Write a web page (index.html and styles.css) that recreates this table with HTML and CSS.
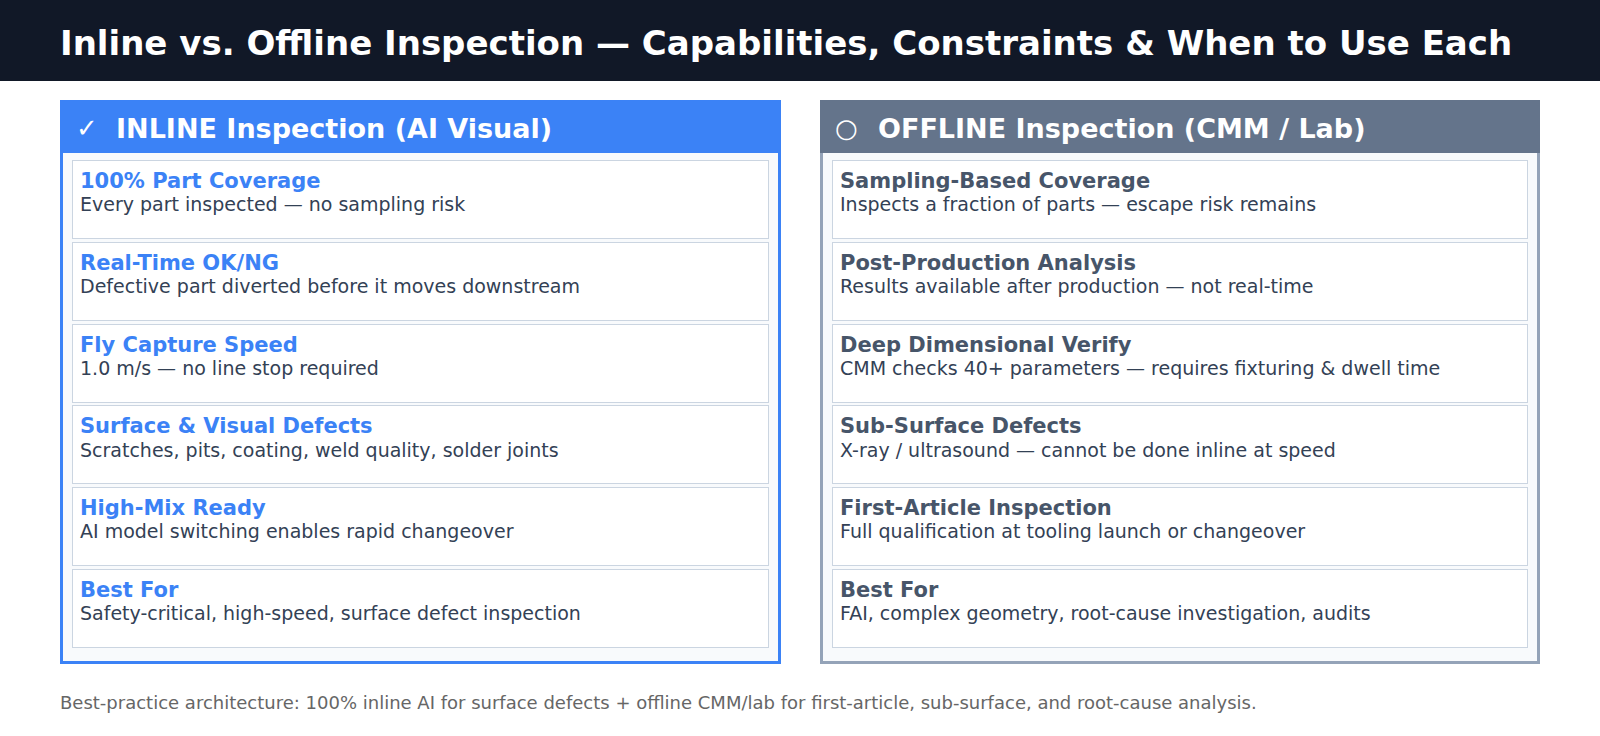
FILE: index.html
```html
<!DOCTYPE html>
<html lang="en">
<head>
<meta charset="utf-8">
<title>Inline vs. Offline Inspection</title>
<link rel="stylesheet" href="styles.css">
</head>
<body>
<header class="topbar">
  <h1 class="topbar-title">Inline vs. Offline Inspection — Capabilities, Constraints &amp; When to Use Each</h1>
</header>
<main class="compare">
  <section class="panel panel-inline">
    <div class="panel-head"><span class="panel-icon">✓</span><span class="panel-name">INLINE Inspection (AI Visual)</span></div>
    <div class="panel-body">
      <div class="item"><div class="item-title">100% Part Coverage</div><div class="item-desc">Every part inspected — no sampling risk</div></div>
      <div class="item"><div class="item-title">Real-Time OK/NG</div><div class="item-desc">Defective part diverted before it moves downstream</div></div>
      <div class="item"><div class="item-title">Fly Capture Speed</div><div class="item-desc">1.0 m/s — no line stop required</div></div>
      <div class="item"><div class="item-title">Surface &amp; Visual Defects</div><div class="item-desc">Scratches, pits, coating, weld quality, solder joints</div></div>
      <div class="item"><div class="item-title">High-Mix Ready</div><div class="item-desc">AI model switching enables rapid changeover</div></div>
      <div class="item"><div class="item-title">Best For</div><div class="item-desc">Safety-critical, high-speed, surface defect inspection</div></div>
    </div>
  </section>
  <section class="panel panel-offline">
    <div class="panel-head"><span class="panel-icon">○</span><span class="panel-name">OFFLINE Inspection (CMM / Lab)</span></div>
    <div class="panel-body">
      <div class="item"><div class="item-title">Sampling-Based Coverage</div><div class="item-desc">Inspects a fraction of parts — escape risk remains</div></div>
      <div class="item"><div class="item-title">Post-Production Analysis</div><div class="item-desc">Results available after production — not real-time</div></div>
      <div class="item"><div class="item-title">Deep Dimensional Verify</div><div class="item-desc">CMM checks 40+ parameters — requires fixturing &amp; dwell time</div></div>
      <div class="item"><div class="item-title">Sub-Surface Defects</div><div class="item-desc">X-ray / ultrasound — cannot be done inline at speed</div></div>
      <div class="item"><div class="item-title">First-Article Inspection</div><div class="item-desc">Full qualification at tooling launch or changeover</div></div>
      <div class="item"><div class="item-title">Best For</div><div class="item-desc">FAI, complex geometry, root-cause investigation, audits</div></div>
    </div>
  </section>
</main>
<footer class="note">Best-practice architecture: 100% inline AI for surface defects + offline CMM/lab for first-article, sub-surface, and root-cause analysis.</footer>
</body>
</html>
```

FILE: styles.css
```css
* { box-sizing: border-box; }
html, body { margin: 0; padding: 0; background: #ffffff; }
body { font-family: "DejaVu Sans", "Liberation Sans", sans-serif; color: #334155; }

.topbar {
  height: 81px;
  background: #111827;
  display: flex;
  align-items: center;
  padding: 4px 0 0 60px;
}
.topbar-title {
  margin: 0;
  color: #ffffff;
  font-size: 34px;
  font-weight: bold;
  line-height: 1;
  white-space: nowrap;
}

.compare {
  display: grid;
  grid-template-columns: 721px 720px;
  column-gap: 39px;
  padding: 19px 60px 0 60px;
}

.panel {
  height: 564px;
  border: 3px solid #3b82f6;
  background: #f8fafc;
  display: flex;
  flex-direction: column;
}
.panel-offline { border-color: #94a3b8; }

.panel-head {
  margin: -3px -3px 0 -3px;
  padding: 3px 0 0 16px;
  height: 53px;
  background: #3b82f6;
  color: #ffffff;
  display: flex;
  align-items: center;
  font-weight: bold;
}
.panel-offline .panel-head { background: #64748b; padding-left: 15px; }
.panel-icon {
  font-size: 26px;
  font-weight: normal;
  width: 40px;
  line-height: 1;
}
.panel-offline .panel-icon { width: 43px; }
.panel-name { font-size: 27px; line-height: 1; }

.panel-body {
  padding: 7px 9px 0 9px;
  display: flex;
  flex-direction: column;
  gap: 2.8px;
}
.item {
  height: 79px;
  background: #ffffff;
  border: 1px solid #cbd5e1;
  padding: 8px 7px 0 7px;
}
.item-title {
  font-size: 21px;
  font-weight: bold;
  line-height: 1.15;
  color: #3b82f6;
}
.panel-offline .item-title { color: #475569; }
.item-desc {
  font-size: 19px;
  line-height: 1.2;
  color: #334155;
}

.note {
  margin: 28px 0 0 60px;
  font-size: 18px;
  line-height: 22px;
  color: #666666;
}
```
